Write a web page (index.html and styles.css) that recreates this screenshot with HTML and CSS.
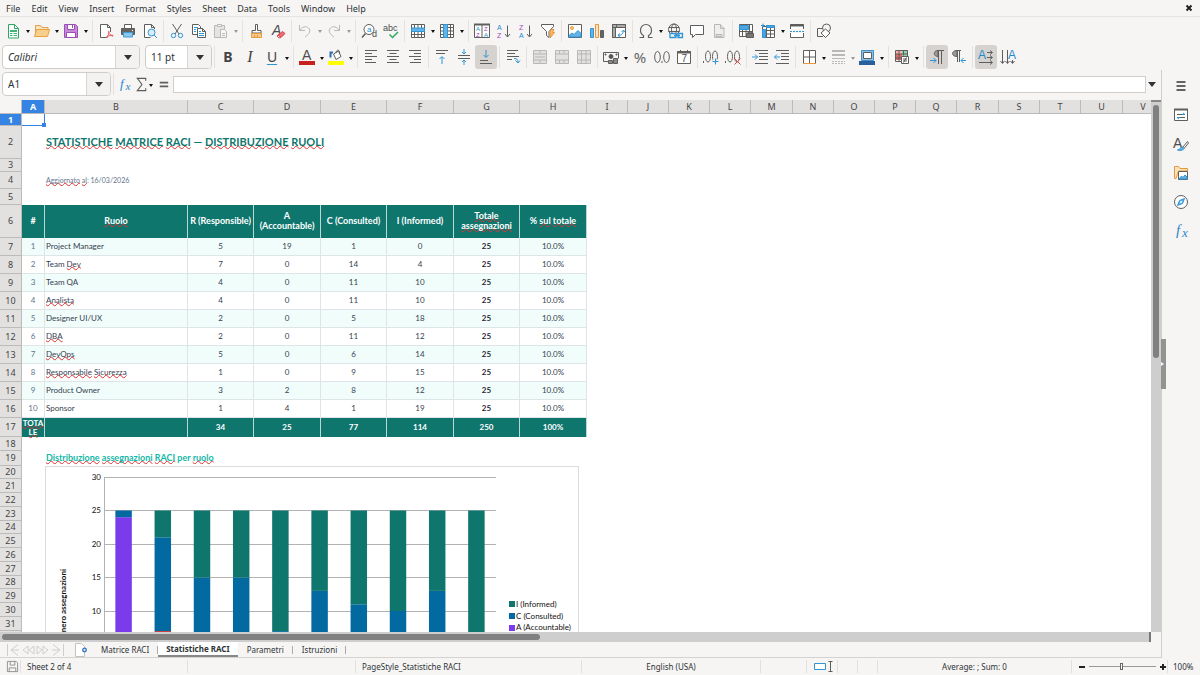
FILE: index.html
```html
<!DOCTYPE html>
<html lang="it">
<head>
    <meta charset="UTF-8">
    <meta name="viewport" content="width=device-width, initial-scale=1.0">
    <title>Statistiche RACI</title>
    <link rel="stylesheet" href="styles.css">
</head>
<body>
    <header class="menubar">
        <nav class="menus">
            <button type="button">File</button>
            <button type="button">Edit</button>
            <button type="button">View</button>
            <button type="button">Insert</button>
            <button type="button">Format</button>
            <button type="button">Styles</button>
            <button type="button">Sheet</button>
            <button type="button">Data</button>
            <button type="button">Tools</button>
            <button type="button">Window</button>
            <button type="button">Help</button>
        </nav>
        <button type="button" class="close" aria-label="Close"><svg viewBox="0 0 8 8"><path d="M1.500 1.500l5 5M6.500 1.500l-5 5"/></svg></button>
    </header>

    <!-- Standard toolbar -->
    <div class="toolbar">
        <button type="button" class="tool" aria-label="New"><svg viewBox="0 0 16 16"><path class="green fill-white" d="M3.500 1.500h6l4 4v9.500h-10z"/><path class="green" d="M9.500 1.500v4h4"/><path class="fill-green" d="M5 7h7v6h-7z"/><path stroke="#fff" d="M5 9.500h7M5 11.500h7M8 9v4"/></svg></button>
        <button type="button" class="arrow" aria-label="New options"></button>
        <button type="button" class="tool" aria-label="Open"><svg viewBox="0 0 16 16"><path stroke="#e0a050" fill="#fbe3bd" d="M1.500 13.500v-11h5l1.500 2h6v3"/><path stroke="#e8a33d" fill="#f9cf90" d="M.5 13.500l2-7h13l-2 7z"/></svg></button>
        <button type="button" class="arrow" aria-label="Open options"></button>
        <button type="button" class="tool" aria-label="Save"><svg viewBox="0 0 16 16"><path stroke="#9b4fb5" fill="#c78ada" d="M1.500 1.500h11l2 2v11h-13z"/><path stroke="#9b4fb5" fill="#fff" d="M4.500 1.500h7v5h-7zM3.500 9.500h9v5h-9z"/><path stroke="#9b4fb5" d="M9.500 2v3"/></svg></button>
        <button type="button" class="arrow" aria-label="Save options"></button>
        <span class="sep"></span>
        <button type="button" class="tool" aria-label="Export as PDF"><svg viewBox="0 0 16 16"><path class="fill-white" d="M12.500 9v-4.500l-3-3h-7v13h7"/><path d="M9.500 1.500v3h3"/><path stroke="#e2555a" d="M8 15c2-2 3.500-5 3-6.500-1-1-1 1 1 3s3.500 2 3 1-4.500 0-7 2"/></svg></button>
        <button type="button" class="tool" aria-label="Print"><svg viewBox="0 0 16 16"><path class="fill-white" d="M4.500 5v-3.500h7v3.500"/><path fill="#646464" d="M1.500 5.500h13v6h-13z"/><path stroke="#3d9bd8" fill="#8cc8ee" d="M3.500 9.500h9v4.500h-9z"/><path stroke="#fff" d="M12 7.500h1"/></svg></button>
        <button type="button" class="tool" aria-label="Print preview"><svg viewBox="0 0 16 16"><path class="fill-white" d="M12.500 6v-1.500l-3-3h-7v13h6"/><path d="M9.500 1.500v3h3"/><circle class="blue" cx="9.500" cy="9.500" r="3.500" fill="#d9edf9"/><path class="blue" d="M12 12l3 3"/></svg></button>
        <span class="sep"></span>
        <button type="button" class="tool" aria-label="Cut"><svg viewBox="0 0 16 16"><path d="M3.500 1l6.500 10M12.500 1l-6.500 10"/><circle class="blue" cx="4.500" cy="12.500" r="2.200"/><circle class="blue" cx="11.500" cy="12.500" r="2.200"/></svg></button>
        <button type="button" class="tool" aria-label="Copy"><svg viewBox="0 0 16 16"><path class="fill-white" d="M1.500 1.500h6l2 2v8h-8z"/><path class="blue" d="M3 4.500h4M3 6.500h2M3 8.500h2"/><path class="fill-white" d="M6.500 5.500h5l3 3v6h-8z"/><path d="M11.500 5.500v3h3"/><path class="blue" d="M8 8.500h2M8 10.500h5M8 12.500h5"/></svg></button>
        <button type="button" class="tool faded" aria-label="Paste"><svg viewBox="0 0 16 16"><path fill="#cfcdca" d="M1.500 2.500h10v12h-10z"/><path class="fill-white" d="M4.500 1.500h4v2h-4zM7.500 6.500h4l2 2v6h-6z"/><path d="M9 10.500h3M9 12.500h3"/></svg></button>
        <button type="button" class="arrow faded" aria-label="Paste options"></button>
        <span class="sep"></span>
        <button type="button" class="tool" aria-label="Clone formatting"><svg viewBox="0 0 16 16"><path class="fill-white" d="M7.500 1.500h2v6h3.500v2.500h-9v-2.500h3.500z"/><path stroke="#e59a3c" fill="#f8c98a" d="M3.500 10.500h10v4h-10zM6.500 12v2.500M9.500 12v2.500"/></svg></button>
        <button type="button" class="tool" aria-label="Clear formatting"><svg viewBox="0 0 16 16"><text x="2" y="12" font-size="14" font-style="italic">A</text><path stroke="#d9464f" fill="#ef6a72" d="M8 12l4.500-3.500 2.500 2-4 4z"/><path stroke="#d9464f" fill="#fff" d="M8 12l-1 1 2 2 2-.5z"/></svg></button>
        <span class="sep"></span>
        <button type="button" class="tool faded" aria-label="Undo"><svg viewBox="0 0 16 16"><path d="M2.500 2v5.500h5.500M3 7c2-3 6-4.500 8.500-2s1.500 5.500-3.500 9"/></svg></button>
        <button type="button" class="arrow faded" aria-label="Undo history"></button>
        <button type="button" class="tool faded" aria-label="Redo"><svg viewBox="0 0 16 16"><path d="M13.500 2v5.500h-5.500M13 7c-2-3-6-4.500-8.500-2s-1.500 5.500 3.500 9"/></svg></button>
        <button type="button" class="arrow faded" aria-label="Redo history"></button>
        <span class="sep"></span>
        <button type="button" class="tool" aria-label="Find and replace"><svg viewBox="0 0 16 16"><circle cx="8" cy="6.500" r="5" class="fill-white"/><path stroke-width="1.500" d="M4.500 10.500l-3.500 4"/><text class="fill-blue" x="6" y="9" font-size="8">a</text><text x="11" y="14" font-size="9">d</text></svg></button>
        <button type="button" class="tool" aria-label="Spelling"><svg viewBox="0 0 16 16"><text x="0" y="8" font-size="9">abc</text><path class="green" stroke-width="1.500" d="M6.500 11.500l3 3 5.500-5.500"/></svg></button>
        <span class="sep"></span>
        <button type="button" class="tool" aria-label="Row"><svg viewBox="0 0 16 16"><path class="fill-white" d="M1.500 1.500h13v13h-13zM4.500 1.500v13M8 1.500v13M11.500 1.500v13M1.500 11.500h13"/><path class="blue" fill="#62b3e8" d="M1.500 5h13v3.500h-13z"/></svg></button>
        <button type="button" class="arrow" aria-label="Row options"></button>
        <button type="button" class="tool" aria-label="Column"><svg viewBox="0 0 16 16"><path class="fill-white" d="M1.500 1.500h13v13h-13zM11.500 1.500v13M1.500 4.500h13M1.500 8h13M1.500 11.500h13"/><path class="blue" fill="#62b3e8" d="M4.500 1.500h4v13h-4z"/></svg></button>
        <button type="button" class="arrow" aria-label="Column options"></button>
        <span class="sep"></span>
        <button type="button" class="tool" aria-label="Sort"><svg viewBox="0 0 16 16"><path class="fill-white" d="M.5 1.500h15v13h-15zM8 2v12"/><path stroke-width="2" d="M0 1.500h16"/><text class="fill-blue" x="2" y="8" font-size="6">A</text><text class="fill-purple" x="2" y="14" font-size="6">Z</text><text class="fill-purple" x="10" y="8" font-size="6">Z</text><text class="fill-blue" x="10" y="14" font-size="6">A</text></svg></button>
        <button type="button" class="tool" aria-label="Sort ascending"><svg viewBox="0 0 16 16"><text class="fill-blue" x="1" y="7" font-size="7">A</text><text class="fill-purple" x="1" y="15" font-size="7">Z</text><path d="M11.500 2.500v11M9 11l2.500 3 2.500-3"/></svg></button>
        <button type="button" class="tool" aria-label="Sort descending"><svg viewBox="0 0 16 16"><text class="fill-purple" x="1" y="7" font-size="7">Z</text><text class="fill-blue" x="1" y="15" font-size="7">A</text><path d="M11.500 2.500v11M9 11l2.500 3 2.500-3"/></svg></button>
        <button type="button" class="tool" aria-label="AutoFilter"><svg viewBox="0 0 16 16"><path class="fill-white" d="M1.500 1.500h12v2l-4.500 5v6l-2.500-2v-4l-5-5z"/><path stroke="#e8973a" fill="#f8b968" d="M11 6.500h3l-1.500 3h2l-4.500 5.500 1-4h-2z"/></svg></button>
        <span class="sep"></span>
        <button type="button" class="tool" aria-label="Insert image"><svg viewBox="0 0 16 16"><path class="fill-white" d="M1.500 1.500h13v13h-13z"/><circle cx="5" cy="5" r="1.500" stroke="#e8a33d" fill="#f8c98a"/><path class="blue" fill="#62b3e8" d="M2 14v-1.500l3-2.500 2 1.500 4-4 3 3v3.500z"/></svg></button>
        <button type="button" class="tool" aria-label="Insert chart"><svg viewBox="0 0 16 16"><path class="blue" fill="#62b3e8" d="M1.500 5.500h3v9h-3z"/><path stroke="#e8973a" fill="#fbe3bd" d="M6.500 1.500h3v13h-3z"/><path fill="#666" d="M11.500 7.500h3v7h-3z"/></svg></button>
        <button type="button" class="tool" aria-label="Pivot table"><svg viewBox="0 0 16 16"><path class="fill-white" d="M1.500 1.500h13v13h-13z"/><path fill="#aaa" d="M1.500 1.500h4v3h-4zM5.500 1.500h9v3h-9zM1.500 4.500h3v10h-3z"/><path class="blue" d="M7 12c3 1 5-1 5.500-4.500M10.500 9l2-2 1.500 2M9 10.500l-2 1.500 1.500 2"/></svg></button>
        <span class="sep"></span>
        <button type="button" class="tool" aria-label="Special character"><svg viewBox="0 0 16 16"><path stroke-width="1.200" d="M1.500 14.500h4v-2c-2-1-3-3-3-5.500 0-3 2.500-5.500 5.500-5.500s5.500 2.500 5.500 5.500c0 2.500-1 4.500-3 5.500v2h4"/></svg></button>
        <button type="button" class="arrow" aria-label="Recent characters"></button>
        <button type="button" class="tool" aria-label="Hyperlink"><svg viewBox="0 0 16 16"><circle cx="7" cy="6.500" r="5.500"/><ellipse cx="7" cy="6.500" rx="2.500" ry="5.500"/><path d="M2 4.500h10M1.500 8.500h11"/><path class="blue" stroke-width="1.300" fill="#f6f5f4" d="M5 10.500h4v4h-6v-4zM11 10.500h4.500v4h-4.500zM7 12.500h6"/></svg></button>
        <button type="button" class="tool" aria-label="Comment"><svg viewBox="0 0 16 16"><path class="fill-white" d="M1.500 2.500h13v9h-8l-3 3v-3h-2z"/></svg></button>
        <button type="button" class="tool faded" aria-label="Headers and footers"><svg viewBox="0 0 16 16"><path fill="#e5e4e2" d="M3.500 1.500h6l3.500 3.500v9.500h-9.500z"/><path fill="#bbb" d="M5 11.500h6v2h-6zM9.500 1.500v4h4"/></svg></button>
        <span class="sep"></span>
        <button type="button" class="tool" aria-label="Print area"><svg viewBox="0 0 16 16"><path class="fill-white" d="M1.500 1.500h13v12h-13zM4.500 1.500v12M8 1.500v12M11.500 1.500v12M1.500 8.500h13"/><path class="blue" fill="#4ca5e0" d="M1.500 2.500h9v4h-9z"/><path fill="#777" d="M8.500 10.500h7v4h-7zM10 8.500h4v2h-4z"/></svg></button>
        <button type="button" class="tool" aria-label="Freeze rows and columns"><svg viewBox="0 0 16 16"><path class="fill-white" d="M2.500 3.500h12v11h-12zM6.500 2v12M10.500 3v11M2 7.500h12M2 11h12"/><path class="blue" fill="#4ca5e0" d="M2.500 6.500h3v8h-3zM6.500 2.500h8v2h-8z"/><path class="blue" d="M1 2.500h4M3 .5v4"/></svg></button>
        <button type="button" class="arrow" aria-label="Freeze options"></button>
        <button type="button" class="tool" aria-label="Split window"><svg viewBox="0 0 16 16"><path class="fill-white" d="M1.500 6v-4.500h13v4.500M1.500 10v4.500h13v-4.500"/><path stroke-width="2" d="M1 2.500h14"/><path class="blue" stroke-dasharray="2 1" d="M1 8.500h14"/></svg></button>
        <span class="sep"></span>
        <button type="button" class="tool" aria-label="Draw functions"><svg viewBox="0 0 16 16"><path d="M7 13.500h-5.500v-8h5"/><circle cx="10.500" cy="5" r="4"/><path class="fill-white" d="M9.500 6l4.500 4-4.500 4.500-4.500-4.500z"/></svg></button>
    </div>

    <!-- Formatting toolbar -->
    <div class="toolbar formatting">
        <div class="combo font-name">
            <input type="text" value="Calibri" aria-label="Font name">
            <button type="button" aria-label="Font list"></button>
        </div>
        <div class="combo font-size">
            <input type="text" value="11 pt" aria-label="Font size">
            <button type="button" aria-label="Size list"></button>
        </div>
        <span class="sep"></span>
        <button type="button" class="tool glyph bold">B</button>
        <button type="button" class="tool glyph italic">I</button>
        <button type="button" class="tool glyph underline">U</button>
        <button type="button" class="arrow" aria-label="Underline style"></button>
        <span class="sep"></span>
        <button type="button" class="tool" aria-label="Font color"><svg viewBox="0 0 16 16"><text x="3" y="11" font-size="14">A</text><path class="fill-red" d="M0 12h16v4h-16z"/></svg></button>
        <button type="button" class="arrow" aria-label="Font color list"></button>
        <button type="button" class="tool" aria-label="Highlight color"><svg viewBox="0 0 16 16"><path class="fill-white" d="M5.500 5l5-3 2.500 5.500-5 3z"/><path d="M8 4c0-3 3-4 3.500-1v2"/><path stroke="#2a6fb0" stroke-width="2" d="M5 3.500h-2.500v5"/><path fill="#ff0" stroke="none" d="M0 12h16v4h-16z"/></svg></button>
        <button type="button" class="arrow" aria-label="Highlight color list"></button>
        <span class="sep"></span>
        <button type="button" class="tool" aria-label="Align left"><svg viewBox="0 0 16 16"><path d="M2 1.500h12M2 4.500h7M2 7.500h12M2 10.500h7M2 13.500h11"/></svg></button>
        <button type="button" class="tool" aria-label="Align center"><svg viewBox="0 0 16 16"><path d="M2 1.500h12M4.500 4.500h7M2 7.500h12M4.500 10.500h7M2 13.500h12"/></svg></button>
        <button type="button" class="tool" aria-label="Align right"><svg viewBox="0 0 16 16"><path d="M2 1.500h12M7 4.500h7M2 7.500h12M7 10.500h7M3 13.500h11"/></svg></button>
        <span class="sep"></span>
        <button type="button" class="tool" aria-label="Align top"><svg viewBox="0 0 16 16"><path d="M2 1.500h12M2 4.500h9"/><path class="blue" d="M8 15v-7M5.500 10l2.500-2.500 2.500 2.500"/></svg></button>
        <button type="button" class="tool" aria-label="Center vertically"><svg viewBox="0 0 16 16"><path d="M2 6.500h12M2 9.500h12"/><path class="blue" d="M8 0v5M6 3l2 2 2-2M8 16v-5M6 13l2-2 2 2"/></svg></button>
        <button type="button" class="tool pressed" aria-label="Align bottom"><svg viewBox="0 0 16 16"><path d="M2 11.500h8M2 14.500h12"/><path class="blue" d="M8 1v7M5.500 6l2.500 2.500 2.500-2.500"/></svg></button>
        <span class="sep"></span>
        <button type="button" class="tool" aria-label="Wrap text"><svg viewBox="0 0 16 16"><path d="M2 1.500h11M2 4.500h8M2 7.500h12M2 10.500h5"/><path class="blue" d="M9 9.500c3 0 4 1 4 4M10.500 11.500l2.500 2.500 2-2.500"/></svg></button>
        <span class="sep"></span>
        <button type="button" class="tool faded" aria-label="Merge and center"><svg viewBox="0 0 16 16"><path fill="#c6c4c1" d="M1.500 1.500h13v13h-13zM1.500 5h13M1.500 11h13M8 1.500v3.500M8 11v3.500M3 8h10"/></svg></button>
        <button type="button" class="tool faded" aria-label="Merge cells"><svg viewBox="0 0 16 16"><path fill="#c6c4c1" d="M1.500 1.500h13v13h-13zM1.500 5h13M1.500 11h13M5.500 1.500v3.500M10 1.500v3.500M5.500 11v3.500M10 11v3.500"/></svg></button>
        <button type="button" class="tool faded" aria-label="Unmerge cells"><svg viewBox="0 0 16 16"><path fill="#c6c4c1" d="M1.500 1.500h13v13h-13zM1.500 5h13M1.500 11h13M5.500 1.500v13M10 1.500v13"/></svg></button>
        <span class="sep"></span>
        <button type="button" class="tool" aria-label="Format as currency"><svg viewBox="0 0 16 16"><path d="M5 12.500h-4.500v-9h15v6"/><circle cx="8" cy="7.500" r="2" fill="#555"/><path fill="#555" d="M2 5h1v1h-1zM13 5h1v1h-1z"/><path fill="#8a8a8a" d="M5.500 11.500h4v3h-4zM10.500 9.500h4v5h-4z"/></svg></button>
        <button type="button" class="arrow" aria-label="Currency list"></button>
        <button type="button" class="tool glyph light">%</button>
        <button type="button" class="tool" aria-label="Format as number"><svg viewBox="0 0 16 16"><ellipse cx="3.500" cy="8" rx="2.800" ry="5.500"/><ellipse cx="12.500" cy="8" rx="2.800" ry="5.500"/><path d="M8 12v2"/></svg></button>
        <button type="button" class="tool" aria-label="Format as date"><svg viewBox="0 0 16 16"><path class="fill-white" d="M1.500 2.500h13v12h-13z"/><path stroke-width="2" d="M1 3.500h14"/><path d="M4.500 1v3M11.500 1v3"/><text x="5.500" y="13" font-size="10">7</text></svg></button>
        <span class="sep"></span>
        <button type="button" class="tool" aria-label="Add decimal place"><svg viewBox="0 0 16 16"><path d="M.5 12v2"/><ellipse cx="5" cy="7.500" rx="2.500" ry="5.500"/><ellipse cx="12" cy="7.500" rx="2.500" ry="5.500"/><path stroke="#f6f5f4" stroke-width="3" d="M9.500 12h6"/><path class="blue" d="M9.500 12.500h6M12.500 9.500v6"/></svg></button>
        <button type="button" class="tool" aria-label="Delete decimal place"><svg viewBox="0 0 16 16"><path d="M.5 12v2"/><ellipse cx="5" cy="7.500" rx="2.500" ry="5.500"/><ellipse cx="12" cy="7.500" rx="2.500" ry="5.500"/><path stroke="#e0474c" d="M9.500 9.500l6 6M15.500 9.500l-6 6"/></svg></button>
        <span class="sep"></span>
        <button type="button" class="tool" aria-label="Increase indent"><svg viewBox="0 0 16 16"><path d="M3 1.500h13M7 4.500h9M7 7.500h9M7 10.500h9M3 14.500h13"/><path class="blue" d="M0 8h5.500M3 5.500l2.500 2.500-2.500 2.500"/></svg></button>
        <button type="button" class="tool" aria-label="Decrease indent"><svg viewBox="0 0 16 16"><path d="M2 1.500h13M7 4.500h8M7 7.500h8M7 10.500h8M2 14.500h13"/><path class="blue" d="M6 8h-5.500M3 5.500l-2.500 2.500 2.500 2.500"/></svg></button>
        <span class="sep"></span>
        <button type="button" class="tool" aria-label="Borders"><svg viewBox="0 0 16 16"><path class="fill-white" d="M2.500 14v-12.500h12v12.500M8.500 1.500v12.500M2.500 8h12"/><path stroke="#e8973a" d="M2 14.500h13"/></svg></button>
        <button type="button" class="arrow" aria-label="Borders list"></button>
        <button type="button" class="tool faded" aria-label="Border style"><svg viewBox="0 0 16 16"><path stroke-width="2" d="M2 2h13M2 6h13"/><path d="M2 9.500h13"/><path stroke-dasharray="2 1" d="M2 12.500h13M2 14.500h13"/></svg></button>
        <button type="button" class="arrow faded" aria-label="Border style list"></button>
        <button type="button" class="tool" aria-label="Border color"><svg viewBox="0 0 16 16"><path stroke="#3d8ec9" fill="#8fbfe2" d="M2.500 1.500h12v10h-12z"/><path class="fill-white" d="M4.500 3.500h8v6h-8z"/><path fill="#2a6099" stroke="none" d="M0 12h16v4h-16z"/></svg></button>
        <button type="button" class="arrow" aria-label="Border color list"></button>
        <span class="sep"></span>
        <button type="button" class="tool" aria-label="Conditional formatting"><svg viewBox="0 0 16 16"><path fill="#f6b0ad" stroke="none" d="M2 1h6v4h-6z"/><path fill="#8fd3a8" stroke="none" d="M8 1h6v7h-6z"/><path fill="#e06b6b" stroke="none" d="M2 5h6v6h-6z"/><path d="M1.500 1.500h12v11h-12zM5 1.500v11M9.500 1.500v5M1.500 5h12M1.500 9h6"/><path class="fill-white" d="M7.500 7.500h7v7h-7z"/><path d="M9 10h4M9 12h4M12.500 8.500l-3 5"/></svg></button>
        <button type="button" class="arrow" aria-label="Conditional formatting list"></button>
        <span class="sep"></span>
        <button type="button" class="tool pressed" aria-label="Left to right"><svg viewBox="0 0 16 16"><path fill="#9a9997" d="M9 1.500c-5 0-5 6 0 6z"/><path d="M9.500 15v-13.500M12.500 15v-13.500M8 1.500h7"/><path class="blue" d="M1 11.500h6M4.500 9l2.500 2.500-2.500 2.500"/></svg></button>
        <button type="button" class="tool" aria-label="Right to left"><svg viewBox="0 0 16 16"><path fill="#9a9997" d="M6 1.500c-6 0-6 6 0 6z"/><path d="M6.500 13v-11.500M8.500 13v-11.500M5 1.500h5"/><path class="blue" d="M15 11.500h-5M12.500 9l-2.500 2.500 2.500 2.500"/></svg></button>
        <span class="sep"></span>
        <button type="button" class="tool pressed" aria-label="Text from left to right"><svg viewBox="0 0 16 16"><text class="fill-blue" x="0" y="10" font-size="12">A</text><path d="M9 3.500h5M12 1.500l2.500 2-2.500 2M9 8.500h5M12 6.500l2.500 2-2.500 2M1 13.500h13M12 11.500l2.500 2-2.500 2"/></svg></button>
        <button type="button" class="tool" aria-label="Text from top to bottom"><svg viewBox="0 0 16 16"><path d="M2.500 1v13M.5 12l2 2.500 2-2.500M7.500 1v13M5.500 12l2 2.500 2-2.500M12.500 11v3M10.500 12l2 2.500 2-2.500"/><text class="fill-blue" x="8" y="10" font-size="12">A</text></svg></button>
    </div>

    <div class="workspace">
        <main class="document">
            <div class="formula-bar">
                <div class="combo name-box">
                    <input type="text" value="A1" aria-label="Name box">
                    <button type="button" aria-label="Ranges"></button>
                </div>
                <span class="sep"></span>
                <button type="button" class="fx-tool" aria-label="Function wizard"><svg viewBox="0 0 16 16"><text class="fx" x="2" y="12" font-size="14">f</text><text class="fx" x="8" y="14" font-size="12">x</text></svg></button>
                <button type="button" class="fx-tool narrow" aria-label="Select function"><svg viewBox="0 0 16 16"><path stroke-width="1.200" d="M12.500 4v-2.500h-9l5 6.500-5 6.500h9v-2.500"/></svg></button>
                <button type="button" class="arrow" aria-label="Function list"></button>
                <button type="button" class="fx-tool" aria-label="Formula"><svg viewBox="0 0 16 16"><path stroke-width="2" d="M4 6h9M4 10h9"/></svg></button>
                <input type="text" class="formula" aria-label="Formula input">
                <button type="button" class="expand" aria-label="Expand formula bar"></button>
            </div>

            <div class="sheet-area">
                <div class="sheet">
                    <table class="grid">
                        <colgroup>
                            <col class="c-head"><col class="c-a"><col class="c-b"><col class="c-odd"><col class="c-even"><col class="c-odd"><col class="c-even"><col class="c-odd"><col class="c-even">
                            <col class="c-rest" span="4"><col class="c-wide"><col class="c-rest" span="4"><col class="c-wide"><col class="c-rest" span="2"><col class="c-wide"><col class="c-rest">
                        </colgroup>
                        <thead>
                            <tr>
                                <td class="corner"></td><th class="current">A</th><th>B</th><th>C</th><th>D</th><th>E</th><th>F</th><th>G</th><th>H</th><th>I</th><th>J</th><th>K</th><th>L</th><th>M</th><th>N</th><th>O</th><th>P</th><th>Q</th><th>R</th><th>S</th><th>T</th><th>U</th><th>V</th>
                            </tr>
                        </thead>
                        <tbody>
                            <tr class="h12"><th class="current">1</th><td class="cursor"></td></tr>
                            <tr class="h33"><th>2</th><td></td><td class="title"><span class="typo">STATISTICHE</span> <span class="typo">MATRICE</span> <span class="typo">RACI</span> — <span class="typo">DISTRIBUZIONE</span> <span class="typo">RUOLI</span></td></tr>
                            <tr class="h13"><th>3</th></tr>
                            <tr class="h17"><th>4</th><td></td><td class="note"><span class="typo">Aggiornato</span> <span class="typo">al</span>: 16/03/2026</td></tr>
                            <tr class="h16"><th>5</th></tr>
                            <tr class="h33 band"><th>6</th><td>#</td><td><span class="typo">Ruolo</span></td><td>R (Responsible)</td><td>A (Accountable)</td><td>C (Consulted)</td><td>I (Informed)</td><td><span class="typo">Totale</span> <span class="typo">assegnazioni</span></td><td>% <span class="typo">sul</span> <span class="typo">totale</span></td></tr>
                            <tr class="data"><th>7</th><td>1</td><td>Project Manager</td><td>5</td><td>19</td><td>1</td><td>0</td><td>25</td><td>10.0%</td></tr>
                            <tr class="data"><th>8</th><td>2</td><td>Team <span class="typo">Dev</span></td><td>7</td><td>0</td><td>14</td><td>4</td><td>25</td><td>10.0%</td></tr>
                            <tr class="data"><th>9</th><td>3</td><td>Team QA</td><td>4</td><td>0</td><td>11</td><td>10</td><td>25</td><td>10.0%</td></tr>
                            <tr class="data"><th>10</th><td>4</td><td><span class="typo">Analista</span></td><td>4</td><td>0</td><td>11</td><td>10</td><td>25</td><td>10.0%</td></tr>
                            <tr class="data"><th>11</th><td>5</td><td>Designer UI/UX</td><td>2</td><td>0</td><td>5</td><td>18</td><td>25</td><td>10.0%</td></tr>
                            <tr class="data"><th>12</th><td>6</td><td><span class="typo">DBA</span></td><td>2</td><td>0</td><td>11</td><td>12</td><td>25</td><td>10.0%</td></tr>
                            <tr class="data"><th>13</th><td>7</td><td><span class="typo">DevOps</span></td><td>5</td><td>0</td><td>6</td><td>14</td><td>25</td><td>10.0%</td></tr>
                            <tr class="data"><th>14</th><td>8</td><td><span class="typo">Responsabile</span> <span class="typo">Sicurezza</span></td><td>1</td><td>0</td><td>9</td><td>15</td><td>25</td><td>10.0%</td></tr>
                            <tr class="data"><th>15</th><td>9</td><td>Product Owner</td><td>3</td><td>2</td><td>8</td><td>12</td><td>25</td><td>10.0%</td></tr>
                            <tr class="data"><th>16</th><td>10</td><td>Sponsor</td><td>1</td><td>4</td><td>1</td><td>19</td><td>25</td><td>10.0%</td></tr>
                            <tr class="h19 band total"><th>17</th><td><span class="typo">TOTALE</span></td><td></td><td>34</td><td>25</td><td>77</td><td>114</td><td>250</td><td>100%</td></tr>
                            <tr class="h14"><th>18</th></tr>
                            <tr class="h15"><th>19</th><td></td><td class="subtitle"><span class="typo">Distribuzione</span> <span class="typo">assegnazioni</span> <span class="typo">RACI</span> per <span class="typo">ruolo</span></td></tr>
                            <tr class="h13"><th>20</th></tr>
                            <tr class="h14"><th>21</th></tr>
                            <tr class="h14"><th>22</th></tr>
                            <tr class="h14"><th>23</th></tr>
                            <tr class="h13"><th>24</th></tr>
                            <tr class="h14"><th>25</th></tr>
                            <tr class="h14"><th>26</th></tr>
                            <tr class="h14"><th>27</th></tr>
                            <tr class="h13"><th>28</th></tr>
                            <tr class="h14"><th>29</th></tr>
                            <tr class="h14"><th>30</th></tr>
                            <tr class="h14"><th>31</th></tr>
                            <tr class="h13"><th></th></tr>
                        </tbody>
                    </table>

                    <!-- Floating chart anchored at B20; bars are in data units (x = role, y = assignments) -->
                    <svg class="chart" viewBox="0 0 534 270" role="img" aria-label="Distribuzione assegnazioni RACI per ruolo">
                        <rect class="frame" x="-.5" y=".5" width="533" height="269"/>
                        <path class="gridlines" d="M58 11.500h392M58 44.500h392M58 78.500h392M58 111.500h392M58 145.500h392M58 178.500h392M58 212.500h392M58.500 11v201"/>
                        <g transform="translate(58 212) scale(39.200 -6.700)">
                            <g class="r"><rect x=".29" width=".42" height="5"/><rect x="1.290" width=".42" height="7"/><rect x="2.290" width=".42" height="4"/><rect x="3.290" width=".42" height="4"/><rect x="4.290" width=".42" height="2"/><rect x="5.290" width=".42" height="2"/><rect x="6.290" width=".42" height="5"/><rect x="7.290" width=".42" height="1"/><rect x="8.290" width=".42" height="3"/><rect x="9.290" width=".42" height="1"/></g>
                            <g class="a"><rect x=".29" y="5" width=".42" height="19"/><rect x="8.290" y="3" width=".42" height="2"/><rect x="9.290" y="1" width=".42" height="4"/></g>
                            <g class="c"><rect x=".29" y="24" width=".42" height="1"/><rect x="1.290" y="7" width=".42" height="14"/><rect x="2.290" y="4" width=".42" height="11"/><rect x="3.290" y="4" width=".42" height="11"/><rect x="4.290" y="2" width=".42" height="5"/><rect x="5.290" y="2" width=".42" height="11"/><rect x="6.290" y="5" width=".42" height="6"/><rect x="7.290" y="1" width=".42" height="9"/><rect x="8.290" y="5" width=".42" height="8"/><rect x="9.290" y="5" width=".42" height="1"/></g>
                            <g class="i"><rect x="1.290" y="21" width=".42" height="4"/><rect x="2.290" y="15" width=".42" height="10"/><rect x="3.290" y="15" width=".42" height="10"/><rect x="4.290" y="7" width=".42" height="18"/><rect x="5.290" y="13" width=".42" height="12"/><rect x="6.290" y="11" width=".42" height="14"/><rect x="7.290" y="10" width=".42" height="15"/><rect x="8.290" y="13" width=".42" height="12"/><rect x="9.290" y="6" width=".42" height="19"/></g>
                        </g>
                        <g class="ticks"><text x="55" y="14">30</text><text x="55" y="47">25</text><text x="55" y="81">20</text><text x="55" y="114">15</text><text x="55" y="148">10</text></g>
                        <text class="axis-title" transform="translate(20 103) rotate(-90)">Numero assegnazioni</text>
                        <g class="i"><rect x="463" y="135" width="6" height="6"/></g>
                        <g class="c"><rect x="463" y="147" width="6" height="6"/></g>
                        <g class="a"><rect x="463" y="159" width="6" height="6"/></g>
                        <g class="legend"><text x="470" y="141">I (Informed)</text><text x="470" y="153">C (Consulted)</text><text x="470" y="164">A (Accountable)</text></g>
                    </svg>
                </div>
                <div class="vscroll"><div class="thumb"></div></div>
                <div class="hscroll"><div class="thumb"></div></div>
            </div>

            <div class="tabbar">
                <div class="tab-nav">
                    <button type="button" aria-label="First sheet"><svg viewBox="0 0 14 14"><path d="M1.500 1v12M12 1.500l-7 5.500 7 5.500M5 7h8"/></svg></button>
                    <button type="button" aria-label="Previous sheet"><svg viewBox="0 0 14 14"><path d="M7 3l-5 4 5 4zM13 3l-5 4 5 4z"/></svg></button>
                    <button type="button" aria-label="Next sheet"><svg viewBox="0 0 14 14"><path d="M1 3l5 4-5 4zM7 3l5 4-5 4z"/></svg></button>
                    <button type="button" aria-label="Last sheet"><svg viewBox="0 0 14 14"><path d="M12.500 1v12M2 1.500l7 5.500-7 5.500M1 7h8"/></svg></button>
                </div>
                <button type="button" class="add-sheet" aria-label="Add sheet"><svg viewBox="0 0 14 14"><path fill="#fff" stroke="#c4c2bf" d="M1.500.5h6l3 3v10h-9z"/><circle cx="10.500" cy="7" r="1.800" stroke="#3474b8" stroke-width="1.300" fill="#d7e9f8"/></svg></button>
                <button type="button" class="tab">Matrice RACI</button>
                <button type="button" class="tab active">Statistiche RACI</button>
                <button type="button" class="tab">Parametri</button>
                <button type="button" class="tab">Istruzioni</button>
            </div>
        </main>

        <aside class="sidebar">
            <button type="button" class="collapse" aria-label="Collapse sidebar"></button>
            <button type="button" class="deck" aria-label="Sidebar settings"><svg viewBox="0 0 16 16"><path stroke="#333" stroke-width="1.500" d="M3.500 4h9M3.500 8h9M3.500 12h9"/></svg></button>
            <button type="button" class="deck" aria-label="Properties"><svg viewBox="0 0 16 16"><path class="fill-white" d="M1.500 2.500h13v11h-13z"/><path stroke-width="2" d="M1 2.500h14"/><path d="M4 7.500h5M7 10.500h5"/><path class="blue" d="M9 7.500h3l-2-1.500M7 10.500h-3l2 1.500"/></svg></button>
            <button type="button" class="deck" aria-label="Styles"><svg viewBox="0 0 16 16"><text x="0" y="12" font-size="14">A</text><path class="fill-white" d="M14.500 5.500l-5 6 1.500 1 4.500-5.500z"/><path class="blue" fill="#62b3e8" d="M9.500 11c-3 0-2 3-5 3 2 1 6 .5 6.500-1.500z"/></svg></button>
            <button type="button" class="deck" aria-label="Gallery"><svg viewBox="0 0 16 16"><path stroke="#e8973a" fill="#fbe3bd" d="M1.500 13.500v-12h4l1.500 2h7.500v2.500h-9l-2.500 7.500z"/><path class="fill-white" d="M5.500 6.500h9v8h-9z"/><path class="blue" fill="#62b3e8" d="M6 14l2.500-3 1.500 1.500 2-2.500 2 2v2z"/></svg></button>
            <button type="button" class="deck" aria-label="Navigator"><svg viewBox="0 0 16 16"><circle class="fill-white" cx="8" cy="8" r="6.500"/><path class="blue" fill="#62b3e8" d="M11.500 4.500l-2 5-5 2 2-5z"/><circle cx="8" cy="8" r="1" fill="#fff" stroke="none"/></svg></button>
            <button type="button" class="deck" aria-label="Functions"><svg viewBox="0 0 16 16"><text class="fx" x="3" y="12" font-size="15">f</text><text class="fx" x="9" y="14" font-size="13">x</text></svg></button>
        </aside>
    </div>

    <footer class="statusbar">
        <div class="save-state"><svg viewBox="0 0 14 14"><path d="M1.500 1.500h9.500l1.500 1.500v9.500h-11zM4.500 1.500v4h5v-4M3.500 12.500v-4h7v4"/></svg></div>
        <div>Sheet 2 of 4</div>
        <div></div>
        <div>PageStyle_Statistiche RACI</div>
        <div class="center">English (USA)</div>
        <div></div>
        <div class="modes"><svg viewBox="0 0 22 12"><path class="blue" fill="#fff" d="M1.500 3.500h11v6h-11z"/><path d="M15.500 1.500h4M15.500 11.500h4M17.500 1.500v10"/></svg></div>
        <div></div>
        <div></div>
        <div class="center">Average: ; Sum: 0</div>
        <div class="zoom">
            <button type="button" aria-label="Zoom out"><svg viewBox="0 0 8 8"><path d="M1 4h6"/></svg></button>
            <input type="range" min="0" max="100" value="48" aria-label="Zoom">
            <button type="button" aria-label="Zoom in"><svg viewBox="0 0 8 8"><path d="M1 4h6M4 1v6"/></svg></button>
        </div>
        <div>100%</div>
    </footer>
</body>
</html>
```

FILE: styles.css
```css
* {
    box-sizing: border-box;
}
body {
    margin: 0;
    height: 100vh;
    display: flex;
    flex-direction: column;
    overflow: hidden;
    background: #f6f5f4;
    color: #2e3436;
    font-family: "Noto Sans", sans-serif;
    font-size: 8px;
}
button, input {
    margin: 0;
    padding: 0;
    border: 0;
    background: none;
    color: inherit;
    font: inherit;
}
svg {
    display: block;
    overflow: visible;
    fill: none;
    stroke: #5e5e5c;
}
svg text {
    fill: #4d4d4d;
    stroke: none;
}

/* icon colours */
button svg { font-family: "Liberation Sans", sans-serif; }
.blue { stroke: #3095d6; }
.green { stroke: #2fa866; }
.fill-white { fill: #fff; }
.fill-green { fill: #42b578; stroke: none; }
.fill-red { fill: #c9211e; stroke: none; }
svg .fill-blue { fill: #1e8bcd; }
svg .fill-purple { fill: #a347ba; }
svg .fx {
    fill: #2a86cc;
    font-family: "Liberation Serif", serif;
    font-style: italic;
}
.faded { opacity: 0.4; }

/* menu bar */
.menubar {
    display: flex;
    justify-content: space-between;
    height: 17px;
    border-bottom: 1px solid #e6e4e2;
    font-size: 9px;
}
.menus {
    display: flex;
    gap: 11px;
    padding-left: 6px;
}
.close {
    width: 22px;
}
.close svg {
    width: 8px;
    margin: 0 auto;
    stroke: #222;
    stroke-width: 2;
}

/* toolbars */
.toolbar {
    display: flex;
    align-items: center;
    height: 27px;
    padding-left: 2px;
}
.formatting { height: 26px; }
.tool {
    width: 22px;
    height: 24px;
    border-radius: 3px;
    flex: none;
}
.tool svg {
    width: 16px;
    height: 16px;
    margin: 0 auto;
}
.pressed {
    background: #d5d2cf;
}
.arrow {
    width: 7px;
    height: 24px;
    flex: none;
}
.arrow::before, .combo button::before, .expand::before {
    content: "";
    display: block;
    width: 0;
    margin: 2px auto 0;
    border: 2px solid transparent;
    border-top: 3px solid #111;
    border-bottom: 0;
}
.sep {
    width: 1px;
    height: 22px;
    margin: 0 2px;
    background: #e4e2e0;
    flex: none;
}
.arrow + .sep {
    margin-left: 3px;
}
.glyph {
    font-size: 14px;
    line-height: 14px;
    color: #444;
}
.bold { font-weight: bold; }
.italic {
    font-family: "Liberation Serif", serif;
    font-style: italic;
    font-size: 16px;
}
.underline {
    text-decoration: underline;
    text-decoration-color: #3095d6;
    text-underline-offset: 2px;
}
.light { font-size: 15px; color: #666; }

.combo {
    display: flex;
    height: 24px;
    border: 1px solid #cfccc9;
    border-radius: 4px;
    background: #fff;
    overflow: hidden;
    font-size: 10px;
    flex: none;
}
.combo input {
    flex: 1;
    min-width: 0;
    padding: 0 5px;
}
.combo button {
    width: 24px;
    border-left: 1px solid #d8d5d2;
    background: #f4f2f1;
}
.combo button::before, .expand::before {
    margin-top: 0;
    border-width: 4px;
    border-top: 5px solid #333;
}
.font-name {
    width: 138px;
    margin-right: 5px;
    font-style: italic;
}
.font-size { width: 67px; }

/* document */
.workspace {
    display: flex;
    flex: 1;
    min-height: 0;
}
.document {
    display: flex;
    flex-direction: column;
    flex: 1;
    min-width: 0;
}
.formula-bar {
    display: flex;
    align-items: center;
    height: 30px;
    padding: 0 4px 2px 2px;
}
.name-box { width: 109px; }
.fx-tool { width: 18px; }
.fx-tool.narrow { width: 13px; }
.fx-tool svg {
    width: 15px;
    height: 15px;
    margin: 0 auto;
}
.formula {
    flex: 1;
    height: 17px;
    margin-left: 1px;
    border: 1px solid #d0cdca;
    background: #fff;
    font-size: 9px;
}
.expand { width: 11px; }

.sheet-area {
    display: grid;
    grid-template-columns: 1fr 10px;
    grid-template-rows: 1fr 10px;
    flex: 1;
    min-height: 0;
}
.sheet {
    position: relative;
    overflow: hidden;
    min-width: 0;
    min-height: 0;
    background: #fff;
}
.grid {
    width: 1px;
    table-layout: fixed;
    border-collapse: separate;
    border-spacing: 0;
    font-family: Lato, sans-serif;
    font-size: 8px;
    line-height: 10px;
}
.c-head { width: 22px; }
.c-a { width: 23px; }
.c-b { width: 143px; }
.c-odd { width: 66px; }
.c-even { width: 67px; }
.c-rest { width: 41px; }
.c-wide { width: 42px; }
.grid td, .grid th {
    padding: 0;
}
.grid th, .corner {
    border: solid #bdbbb9;
    border-width: 0 1px 1px 0;
    background: #e2e1df;
    color: #444;
    font-family: "Noto Sans", sans-serif;
    font-size: 9px;
    font-weight: normal;
}
.grid .corner {
    background: #f6f5f4;
}
.grid th.current {
    background: #3584e4;
    color: #fff;
    font-weight: bold;
}
thead tr { height: 14px; }
thead th { border-top: 1px solid #c8c6c4; }
.h12 { height: 12px; }
.h13 { height: 13px; }
.h14 { height: 14px; }
.h15 { height: 15px; }
.h16 { height: 16px; }
.h17 { height: 17px; }
.h19 { height: 19px; }
.h33 { height: 33px; }
.data { height: 18px; }
.cursor {
    position: relative;
    border: solid #3584e4;
    border-width: 0 1px 1px 0;
}
.cursor::after {
    content: "";
    position: absolute;
    right: -2px;
    bottom: -2px;
    width: 4px;
    height: 4px;
    background: #3584e4;
}
.title, .note, .subtitle {
    white-space: nowrap;
}
.grid .title, .grid .note, .grid .subtitle, .data td:nth-child(3) {
    padding: 0 0 2px 1px;
}
.title {
    color: #0f766e;
    font-size: 11px;
    font-weight: bold;
}
.note {
    color: #64748b;
    font-size: 7px;
}
.subtitle {
    color: #14b8a6;
    font-size: 9px;
    font-weight: bold;
}
.typo {
    text-decoration: underline wavy #e03030 1px;
    text-underline-offset: -1px;
    text-decoration-skip-ink: none;
}
.grid .band td {
    padding: 0 2px 2px;
    border-right: 1px solid #b9d8d5;
    background: #0f766e;
    color: #fff;
    font-size: 9px;
    font-weight: bold;
    text-align: center;
}
.band td:nth-child(4) {
    white-space: nowrap;
}
.grid .total td {
    padding: 0;
    font-size: 8px;
    line-height: 9px;
    word-break: break-all;
}
.grid .data td {
    padding-bottom: 1px;
    border: solid #dde5e6;
    border-width: 0 1px 1px 0;
    color: #374151;
    text-align: center;
}
.data:nth-child(odd) td {
    background: #f0fdfa;
}
.grid .data td:nth-child(2) { color: #64748b; }
.grid .data td:nth-child(3) {
    padding-left: 1px;
    text-align: left;
}
.grid .data td:nth-child(8) { font-weight: bold; color: #1f2937; }

.chart {
    position: absolute;
    left: 46px;
    top: 366px;
    width: 534px;
    height: 270px;
    font-family: Lato, sans-serif;
    font-size: 8px;
}
.chart text { fill: #111; }
.chart rect { stroke: none; }
.chart .frame { fill: #fff; stroke: #dcdcdc; }
.gridlines { stroke: #b3b3b3; }
.ticks { text-anchor: end; }
.axis-title { font-weight: bold; text-anchor: end; }
.chart .r { fill: #dc2626; }
.chart .a { fill: #7c3aed; }
.chart .c { fill: #0369a1; }
.chart .i { fill: #0f766e; }

/* scrollbars */
.vscroll, .hscroll {
    background: #cecece;
}
.vscroll {
    padding: 3px 2px 0;
    border-top: 2px solid #888;
}
.hscroll {
    padding: 2px;
    border-right: 2px solid #777;
}
.thumb {
    border-radius: 3px;
    background: #808080;
}
.vscroll .thumb { width: 6px; height: 48%; }
.hscroll .thumb { width: 47%; height: 6px; }

/* sheet tabs */
.tabbar {
    display: flex;
    height: 16px;
    border-bottom: 1px solid #d5d3d0;
    padding-left: 6px;
}
.tab-nav {
    display: flex;
    gap: 1px;
}
.tab-nav svg {
    width: 14px;
    stroke: #d0cecb;
}
.add-sheet {
    margin: 0 4px 0 9px;
}
.add-sheet svg { width: 14px; }
.tab {
    position: relative;
    padding: 0 9px;
}
.tab:not(.active)::after {
    content: "";
    position: absolute;
    right: 0;
    top: 4px;
    height: 8px;
    border-right: 1px solid #aaa;
}
.tab.active {
    padding: 0 8px;
    border-bottom: 2px solid #888;
    background: #fff;
    font-weight: bold;
}

/* sidebar */
.sidebar {
    position: relative;
    display: flex;
    flex-direction: column;
    align-items: center;
    gap: 5px;
    width: 39px;
    padding-top: 4px;
    border-left: 1px solid #d0cecb;
    flex: none;
}
.deck {
    width: 24px;
    height: 24px;
}
.deck svg {
    width: 16px;
    margin: 0 auto;
}
.collapse {
    position: absolute;
    left: -1px;
    top: calc(50% - 25px);
    width: 5px;
    height: 50px;
    background: #959391;
}
.collapse::before {
    content: "";
    display: block;
    width: 0;
    border: 2px solid transparent;
    border-left: 3px solid #fff;
}

/* status bar */
.statusbar {
    display: grid;
    grid-template-columns: 21px 167fr 168fr 226fr 179fr 46px 31px 20px 20px 194fr 96px 32px;
    height: 17px;
    align-items: center;
    line-height: 13px;
}
.statusbar > div {
    height: 13px;
    padding-left: 6px;
    border-right: 1px solid #e2e0de;
    white-space: nowrap;
}
.statusbar > div:last-child {
    padding-left: 5px;
    border: 0;
}
.statusbar .center {
    padding: 0;
    text-align: center;
}
.save-state svg {
    width: 13px;
    stroke: #8e8e8c;
}
.modes svg { width: 22px; }
.statusbar .zoom {
    display: flex;
    align-items: center;
    gap: 3px;
}
.zoom svg {
    width: 8px;
    stroke: #222;
    stroke-width: 2;
}
.zoom input {
    -webkit-appearance: none;
    appearance: none;
    flex: 1;
    min-width: 0;
    height: 1px;
    background: #999;
}
.zoom input::-webkit-slider-thumb {
    -webkit-appearance: none;
    width: 3px;
    height: 7px;
    border: 1px solid #666;
    background: #fff;
}
```
